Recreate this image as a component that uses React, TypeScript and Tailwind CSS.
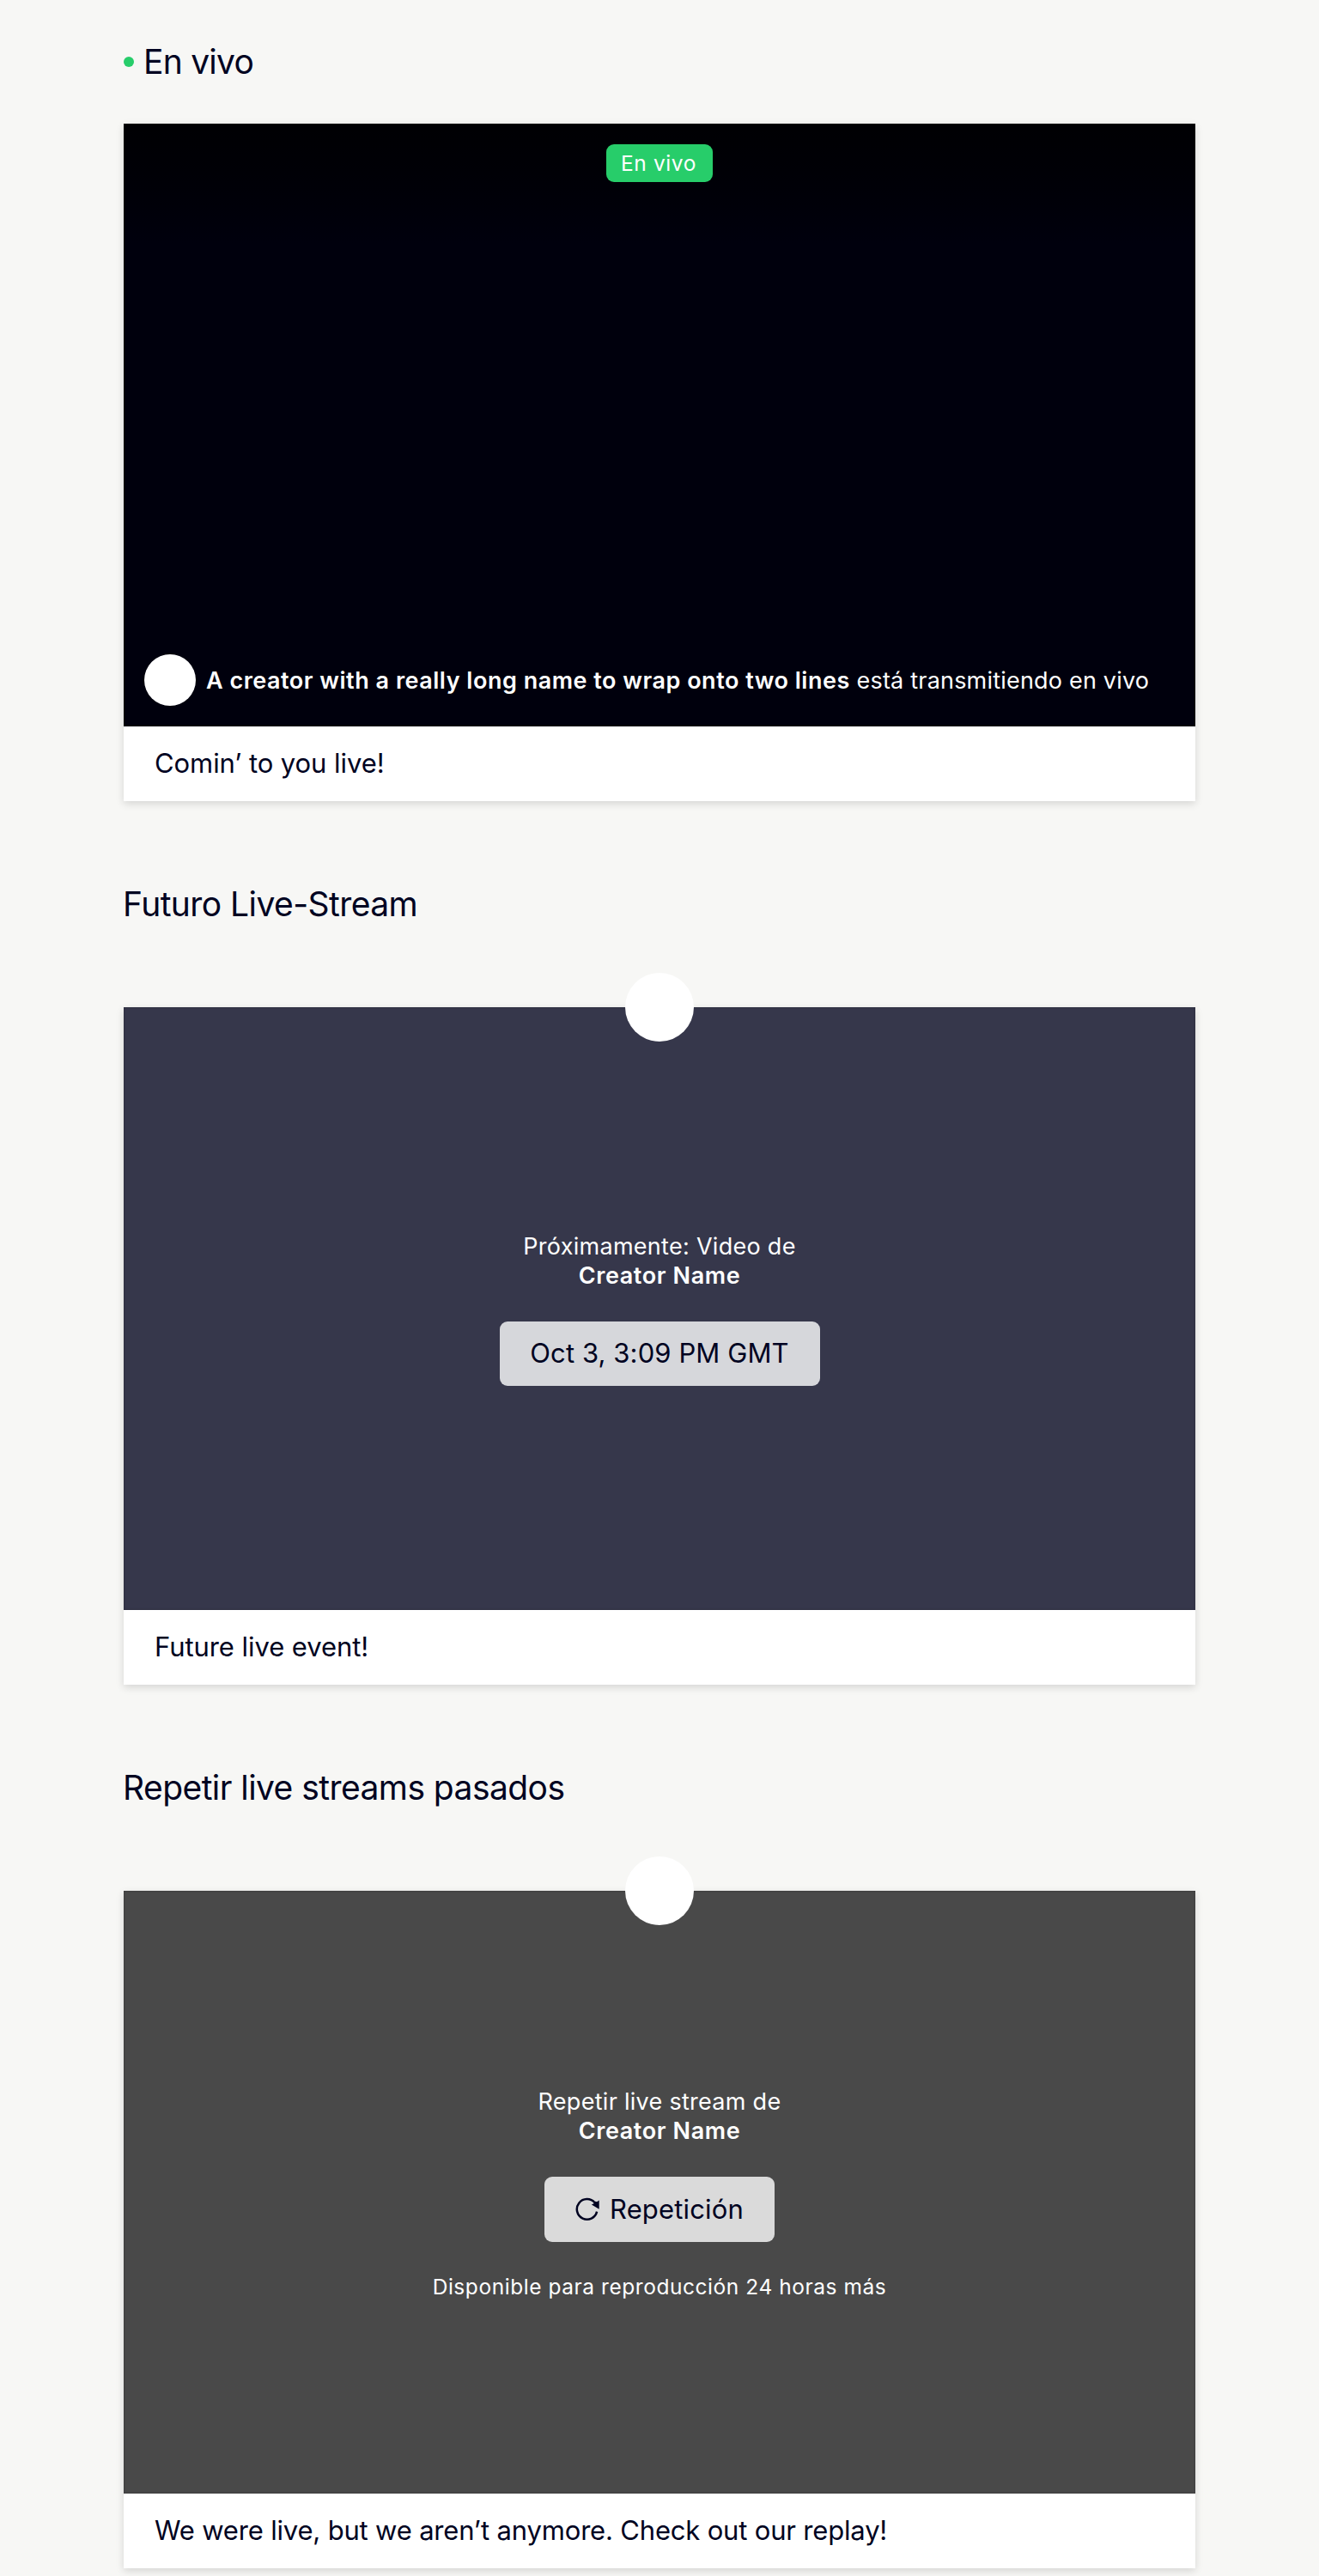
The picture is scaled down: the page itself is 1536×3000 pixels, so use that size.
import React from "react";

function Heading({ children, live = false }: { children: React.ReactNode; live?: boolean }) {
  return (
    <h2 className="flex h-[48px] items-center gap-[11px] whitespace-nowrap text-[39px] leading-[48px] tracking-[-0.56px]">
      {live && <span className="size-3 rounded-full bg-[#27cd6a]" />}
      <span className={live ? "tracking-[-0.75px]" : "-ml-px"}>{children}</span>
    </h2>
  );
}

function Card({ media, tone, caption, spacing, avatar = false, captionClass = "" }: {
  media: React.ReactNode;
  tone: string;
  caption: string;
  spacing: string;
  avatar?: boolean;
  captionClass?: string;
}) {
  return (
    <article className={`relative bg-white shadow-[0_3px_9px_rgba(0,0,0,0.14)] ${spacing}`}>
      <div className={`relative h-[702px] text-white ${tone}`}>
        {media}
        <div className="pointer-events-none absolute inset-0 shadow-[inset_0_0_2px_1px_rgba(0,0,0,0.14)]" />
      </div>
      {avatar && <div className="absolute left-1/2 top-[-40px] size-20 -translate-x-1/2 rounded-full bg-white" />}
      <p className={`h-[87px] px-9 pt-[23px] text-[31px] leading-[39px] ${captionClass}`}>{caption}</p>
    </article>
  );
}

function Creator({ children }: { children: React.ReactNode }) {
  return (
    <p className="mb-[36px] text-center text-[27px] leading-[34px] tracking-[0.28px]">
      {children}
      <strong className="block font-semibold tracking-[0.62px]">Creator Name</strong>
    </p>
  );
}

function ReplayIcon() {
  return (
    <svg className="size-7" viewBox="0 0 28 28" fill="none">
      <path d="M25.1 16.6A11.8 11.8 0 1 1 22.6 6.2" stroke="currentColor" strokeWidth="2.5" />
      <path d="M27.7 3.5v10.2L18.9 8.4l2.6-1.2 1.6-2.4 2 .5z" fill="currentColor" />
    </svg>
  );
}

export default function App() {
  return (
    <main className="h-[3000px] overflow-hidden bg-[#f7f7f5] px-36 pt-12 font-[Inter,sans-serif] text-[#000321]">
      <section>
        <Heading live>En vivo</Heading>
        <Card
          spacing="mt-12"
          tone="bg-linear-to-b from-[#000003] to-[#00000d] to-20%"
          caption="Comin’ to you live!"
          captionClass="tracking-[-0.07px]"
          media={
            <div className="flex h-full flex-col items-center justify-between p-6">
              <span className="h-11 w-[124px] rounded-[9px] bg-[#27cd6a] pl-[17px] text-[24.5px] leading-[45px] tracking-[0.6px]">
                En vivo
              </span>
              <div className="flex items-center gap-3 self-stretch whitespace-nowrap">
                <div className="size-[60px] rounded-full bg-white" />
                <p className="pt-[2px] text-[27px] leading-[34px] tracking-[0.2px]">
                  <strong className="font-semibold tracking-[0.51px]">
                    A creator with a really long name to wrap onto two lines
                  </strong>{" "}
                  está transmitiendo en vivo
                </p>
              </div>
            </div>
          }
        />
      </section>

      <section className="pt-24">
        <Heading>Futuro Live-Stream</Heading>
        <Card
          avatar
          spacing="mt-24"
          tone="bg-[#36374b]"
          caption="Future live event!"
          captionClass="tracking-[-0.07px]"
          media={
            <div className="flex flex-col items-center pt-[262px]">
              <Creator>Próximamente: Video de</Creator>
              <button className="h-[75px] w-[373px] rounded-[9px] bg-[#d6d7db] pb-px text-[31px] tracking-[0.1px] text-[#000321]">
                Oct 3, 3:09 PM GMT
              </button>
            </div>
          }
        />
      </section>

      <section className="pt-24">
        <Heading>Repetir live streams pasados</Heading>
        <Card
          avatar
          spacing="mt-24"
          tone="bg-[#494949]"
          caption="We were live, but we aren’t anymore. Check out our replay!"
          captionClass="tracking-[-0.18px]"
          media={
            <div className="flex flex-col items-center pt-[229px]">
              <Creator>Repetir live stream de</Creator>
              <button className="flex h-[76px] w-[268px] items-center gap-3 rounded-[9px] bg-[#dadada] pl-9 text-[31px] tracking-[0.15px] text-[#000321]">
                <ReplayIcon />
                Repetición
              </button>
              <p className="mt-[37px] text-[24.5px] leading-[31px] tracking-[0.55px]">
                Disponible para reproducción 24 horas más
              </p>
            </div>
          }
        />
      </section>
    </main>
  );
}
